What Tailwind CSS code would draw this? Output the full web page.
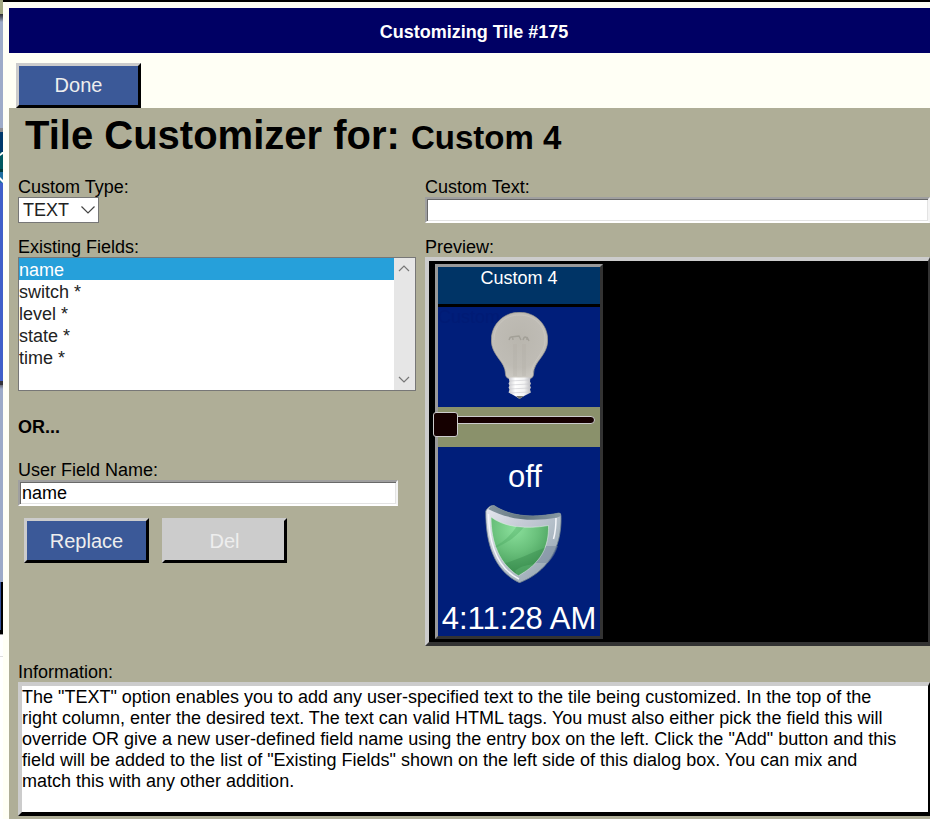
<!DOCTYPE html>
<html lang="en">
<head>
<meta charset="utf-8">
<meta name="viewport" content="width=device-width, initial-scale=1">
<title>Customizing Tile #175</title>
<script src="https://cdn.jsdelivr.net/npm/@tailwindcss/browser@4"></script>
</head>
<body class="flex min-h-screen overflow-x-hidden bg-white font-['Liberation_Sans',Arial,sans-serif] text-[18px] leading-5 text-black">

<!-- Sliver of the dashboard behind the dialog -->
<div class="flex w-[3px] shrink-0 flex-col" aria-hidden="true">
  <div class="h-[14px] bg-[#a3a982]"></div>
  <div class="h-2 bg-linear-to-b from-[#2b2b2f] to-[#9dabc8]"></div>
  <div class="h-[106px] bg-[#9dabc8]"></div>
  <div class="h-1 bg-[#8b8b90]"></div>
  <div class="h-[20px] bg-[#003a6b]"></div>
  <svg class="h-[31px] w-[3px]" viewBox="0 0 3 31"><rect width="3" height="31" fill="#00595f"/><rect y="17" width="3" height="3" fill="#003c3c"/><rect y="20" width="3" height="11" fill="#1f6fa0"/><path d="M0 2 3 -1V2L0 4zM0 25l3 3v3L0 28z" fill="#fff"/></svg>
  <div class="h-[198px] bg-[#4060c8]"></div>
  <div class="h-1 bg-[#35353a]"></div>
  <div class="h-1 bg-linear-to-b from-[#666a77] to-[#9dabc8]"></div>
  <div class="h-[193px] bg-[#9dabc8]"></div>
  <div class="h-[48px] border-r-2 border-black bg-[#31509a]"></div>
  <div class="h-1 bg-black"></div>
  <div class="h-px bg-[#999]"></div>
  <div class="h-[22px] border-b border-[#ddd]"></div>
</div>

<div class="min-w-0 flex-1 border-t-2 border-black bg-[#fffff5] pt-[6px] pl-[6px]">
  <header class="flex h-[45px] items-center justify-center bg-[#000064] pt-[3px] pl-[9px] font-bold text-white">Customizing Tile #175</header>

  <div class="pt-[10px] pl-[7px]">
    <button type="button" class="block h-[45px] w-[125px] border-3 border-t-[#ccc] border-r-black border-b-black border-l-[#ccc] bg-[#3b5998] pb-[2px] text-[20px] text-[#eee]">Done</button>
  </div>

  <main class="bg-[#afae97] pb-[3px] pl-[9px]">
    <h1 class="h-[69px] pt-1 pl-[7px] text-[40px] leading-[46px] font-bold">Tile Customizer for: <span class="text-[33px]">Custom 4</span></h1>

    <form class="grid grid-cols-[398fr_505fr] gap-x-[9px] gap-y-[14px]">
      <div>
        <label for="type" class="block">Custom Type:</label>
        <div class="relative w-fit">
          <select id="type" class="block h-[26px] w-[81px] appearance-none border border-[#777] bg-white pl-1 text-[18px] leading-5 text-[#222]">
            <option>TEXT</option>
          </select>
          <svg class="pointer-events-none absolute top-[9px] right-[4px] h-2 w-[14px]" viewBox="0 0 14 8" fill="none" stroke="#444" stroke-width="1.2"><path d="M.5.5 7 7 13.500.5"/></svg>
        </div>
      </div>
      <div>
        <label for="text" class="block">Custom Text:</label>
        <input id="text" type="text" class="block h-[26px] w-full border-2 border-t-[#9f9f9f] border-r-[#f4f4f4] border-b-white border-l-[#9f9f9f] bg-white pl-[2px] shadow-[inset_1px_1px_#696969,inset_-1px_-1px_#e3e3e3]">
      </div>

      <div>
        <label for="fields" class="block">Existing Fields:</label>
        <div class="flex h-[134px] border border-[#777] bg-white">
          <select id="fields" size="6" class="h-full min-w-0 flex-1 overflow-hidden border-0 bg-white p-0 text-[18px] text-[#222] [scrollbar-width:none]">
            <option selected class="h-[22px] min-h-[22px] p-0 pt-[2px] leading-5 checked:bg-[linear-gradient(#26a0da,#26a0da)] checked:text-white">name</option>
            <option class="h-[22px] min-h-[22px] p-0 pt-[2px] leading-5">switch *</option>
            <option class="h-[22px] min-h-[22px] p-0 pt-[2px] leading-5">level *</option>
            <option class="h-[22px] min-h-[22px] p-0 pt-[2px] leading-5">state *</option>
            <option class="h-[22px] min-h-[22px] p-0 pt-[2px] leading-5">time *</option>
          </select>
          <div class="flex w-[21px] flex-col items-center justify-between bg-[#e6e6e6] py-[7px] pr-px" aria-hidden="true">
            <svg class="h-[7px] w-3" viewBox="0 0 12 7" fill="none" stroke="#777" stroke-width="1.2"><path d="M1 6 6 1l5 5"/></svg>
            <svg class="h-[7px] w-3" viewBox="0 0 12 7" fill="none" stroke="#777" stroke-width="1.2"><path d="M1 1l5 5 5-5"/></svg>
          </div>
        </div>
        <p class="mt-[26px] font-bold">OR...</p>
        <label for="field" class="mt-[23px] block">User Field Name:</label>
        <input id="field" type="text" value="name" class="block h-[26px] w-[380px] max-w-full border-2 border-t-[#9f9f9f] border-r-[#f4f4f4] border-b-white border-l-[#9f9f9f] bg-white pl-[2px] shadow-[inset_1px_1px_#696969,inset_-1px_-1px_#e3e3e3]">
        <div class="mt-3 flex gap-[13px] pl-[6px]">
          <button type="button" class="h-[45px] w-[125px] border-3 border-t-[#ccc] border-r-black border-b-black border-l-[#ccc] bg-[#3b5998] text-[20px] text-[#eee]">Replace</button>
          <button type="button" disabled class="h-[45px] w-[125px] border-3 border-t-[#ccc] border-r-black border-b-black border-l-[#ccc] bg-[#ccc] text-[20px] text-[#eee]">Del</button>
        </div>
      </div>

      <section aria-labelledby="preview-label">
        <h2 id="preview-label">Preview:</h2>
        <div class="border-4 border-t-[#ccc] border-r-2 border-r-[#333] border-b-[#333] border-l-[#ccc] bg-black py-[3px] pl-[6px]">
          <div class="w-[168px] border-3 border-t-[#999] border-r-[#333] border-b-[#333] border-l-[#999] bg-[#001e7a] text-white">
            <div class="h-10 border-b-3 border-black bg-[#003466] pt-[1px] text-center">Custom 4</div>
            <div class="relative flex h-[100px] justify-center pt-[5px]">
              <span class="absolute top-0 left-0 text-[#001b75]">Custom 4</span>
              <svg class="relative h-[87px] w-[57px]" viewBox="0 0 57 87" role="img" aria-label="Light bulb">
                <defs>
                  <radialGradient id="glass" cx=".5" cy=".4" r=".62"><stop offset="0" stop-color="#b9b6ae"/><stop offset=".7" stop-color="#bfbcb5"/><stop offset="1" stop-color="#cdcac3"/></radialGradient>
                  <linearGradient id="cap"><stop offset="0" stop-color="#c9c9cd"/><stop offset=".3" stop-color="#fff"/><stop offset=".7" stop-color="#f2f2f2"/><stop offset="1" stop-color="#b8b8bd"/></linearGradient>
                </defs>
                <path d="M28.500.3C44.500.3 56.700 12.500 56.700 28c0 16-14.200 21-14.200 34 0 3-2 4.500-4 4.500h-20c-2 0-4-1.500-4-4.500C14.500 49 .3 44 .3 28 .3 12.500 12.500.3 28.500.3z" fill="url(#glass)" stroke="#9c998f" stroke-width=".7"/>
                <path d="M3 28C3 13 14 3 28.500 3S54 13 54 28c0 14-13 20-14 34" fill="none" stroke="#d6d3cc" stroke-width="1" opacity=".4"/>
                <path d="M18 28c1-4 4-4 4 0m-2-3 8-1 2 4m2 0c1-4 4-4 4 0m0-3 2 4" fill="none" stroke="#99968d" stroke-width="1.300" opacity=".7"/>
                <path d="M24 32v32M33 32v32" stroke="#aba79f" stroke-width="4" opacity=".18"/>
                <path d="M17.500 65.500h22l-.5 4 1 2-1 2 1 2-1 2 1 3-7 3.500-4 2.500h-1l-4-2.500-6.500-3.500 1-3-1-2 1-2-1-2 1-2z" fill="url(#cap)"/>
                <path d="M18 69l21-1M18 73l21-1M18 77l21-1M19 81l19-1" stroke="#c9c9ce" stroke-width=".6"/>
                <path d="M25 84h8l-4 2.800h-1z" fill="#77776f"/>
              </svg>
            </div>
            <div class="h-10 bg-[#8a916b] pt-[5px]">
              <input type="range" min="0" max="100" value="0" aria-label="Level" class="-ml-[5px] block h-[25px] w-[162px] cursor-pointer appearance-none bg-transparent [&::-webkit-slider-runnable-track]:-mt-[9px] [&::-webkit-slider-runnable-track]:box-border [&::-webkit-slider-runnable-track]:h-2 [&::-webkit-slider-runnable-track]:rounded-full [&::-webkit-slider-runnable-track]:border [&::-webkit-slider-runnable-track]:border-[#ccc] [&::-webkit-slider-runnable-track]:bg-[#150000] [&::-webkit-slider-thumb]:-mt-[5px] [&::-webkit-slider-thumb]:-ml-px [&::-webkit-slider-thumb]:box-border [&::-webkit-slider-thumb]:size-[25px] [&::-webkit-slider-thumb]:appearance-none [&::-webkit-slider-thumb]:rounded-[3px] [&::-webkit-slider-thumb]:border [&::-webkit-slider-thumb]:border-[#ccc] [&::-webkit-slider-thumb]:bg-[#150000]">
            </div>
            <div class="pt-3 pl-3 text-center text-[31px] leading-9">off</div>
            <div class="flex justify-center pt-[10px] pl-[9px]">
              <svg class="h-[78px] w-[77px]" viewBox="0 0 77 78" role="img" aria-label="Green shield">
                <defs>
                  <linearGradient id="rim" x1="0" y1="0" x2="1" y2="1"><stop offset="0" stop-color="#e6e8f0"/><stop offset=".35" stop-color="#c6cbd6"/><stop offset=".6" stop-color="#b0bcc6"/><stop offset="1" stop-color="#8b9ca8"/></linearGradient>
                  <linearGradient id="rimtop"><stop offset="0" stop-color="#8696a0"/><stop offset=".5" stop-color="#63767f"/><stop offset="1" stop-color="#8899a3"/></linearGradient>
                  <radialGradient id="green" cx=".42" cy=".2" r=".8"><stop offset="0" stop-color="#8be09c"/><stop offset=".5" stop-color="#69c07b"/><stop offset="1" stop-color="#3f9553"/></radialGradient>
                  <clipPath id="face"><path d="M6 12C19 22 40 24.500 63.500 20.500 64 42 56 58 33.500 70.500 15 60 6 38 6 12z"/></clipPath>
                </defs>
                <path d="M9 .5C28 13 51 12.500 74 8q2 0 2 3C77 44 62 67 34.500 77.700 9 66 .5 38 .8 6Q4 0 9 .5z" fill="url(#rim)" stroke="#75868f" stroke-width=".8"/>
                <path d="M9 .5C28 13 51 12.500 74 8q2 0 2 3l-4 1.500C48 17 24 15 3 4Q6 0 9 .5z" fill="url(#rimtop)"/>
                <path d="M71 13c0 8-.8 15-2.500 21M34 74C12 63 4 40 3.500 9" fill="none" stroke="#f4f6fa" stroke-width="1.500"/>
                <path d="M73 41h-12c-3 7-7 12-11 17h13c5-5 8-11 10-17z" fill="#73869a" opacity=".5"/>
                <path d="M6 12C19 22 40 24.500 63.500 20.500 64 42 56 58 33.500 70.500 15 60 6 38 6 12z" fill="url(#green)" stroke="#d9ecdf" stroke-width=".6"/>
                <g clip-path="url(#face)">
                  <path d="M8 42C18 38 25 31 32 21l7 1C31 32 22 38 10 43z" fill="#3f9e56" opacity=".3"/>
                  <path d="M20 58C34 55 46 47 66 41v20L34 73z" fill="#2f8144" opacity=".35"/>
                  <path d="M30 66c6-5 13-7 24-7l-20 14z" fill="#65b878" opacity=".4"/>
                </g>
              </svg>
            </div>
            <div class="pt-[19px] text-center text-[31px] leading-[34px] whitespace-nowrap">4:11:28 AM</div>
          </div>
        </div>
      </section>
    </form>

    <section class="mt-4" aria-labelledby="info-label">
      <h2 id="info-label">Information:</h2>
      <p class="min-h-[134px] border-4 border-t-[#ccc] border-r-2 border-r-black border-b-black border-l-[#ccc] bg-white pt-px pr-7 leading-[21px]">The "TEXT" option enables you to add any user-specified text to the tile being customized. In the top of the right column, enter the desired text. The text can valid HTML tags. You must also either pick the field this will override OR give a new user-defined field name using the entry box on the left. Click the "Add" button and this field will be added to the list of "Existing Fields" shown on the left side of this dialog box. You can mix and match this with any other addition.</p>
    </section>
  </main>
</div>
</body>
</html>
